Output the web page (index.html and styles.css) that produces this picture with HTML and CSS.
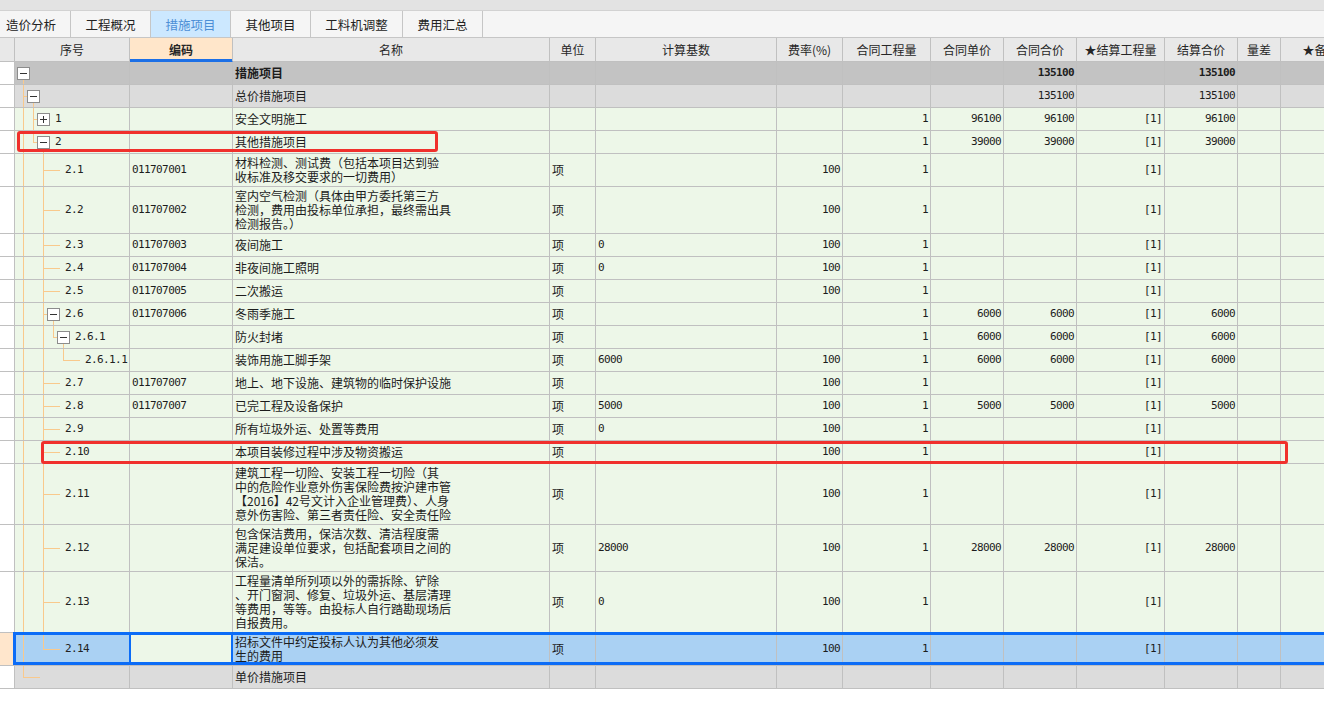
FILE: index.html
```html
<!DOCTYPE html>
<html lang="zh-CN">
<head>
<meta charset="utf-8">
<title>措施项目</title>
<link rel="stylesheet" href="styles.css">
</head>
<body>
<div class="topstrip"></div>
<div class="tabs">
  <div class="tab first">造价分析</div>
  <div class="tab">工程概况</div>
  <div class="tab active">措施项目</div>
  <div class="tab">其他项目</div>
  <div class="tab wide">工料机调整</div>
  <div class="tab">费用汇总</div>
</div>
<div class="grid">
  <div class="row head">
    <div class="c0"></div>
    <div><span>序号</span></div>
    <div class="hcode"><span>编码</span></div>
    <div><span>名称</span></div>
    <div><span>单位</span></div>
    <div><span>计算基数</span></div>
    <div><span>费率(%)</span></div>
    <div><span>合同工程量</span></div>
    <div><span>合同单价</span></div>
    <div><span>合同合价</span></div>
    <div><span>★结算工程量</span></div>
    <div><span>结算合价</span></div>
    <div><span>量差</span></div>
    <div><span>★备注</span></div>
  </div>

  <div class="row root">
    <div class="c0"></div>
    <div class="seq"><span class="bx ex"><span class="box"></span></span></div>
    <div></div>
    <div class="bold"><span>措施项目</span></div>
    <div></div><div></div><div></div><div></div><div></div>
    <div class="n bold"><span>135100</span></div>
    <div></div>
    <div class="n bold"><span>135100</span></div>
    <div></div><div></div>
  </div>

  <div class="row grp">
    <div class="c0"></div>
    <div class="seq"><span class="s t"></span><span class="bx ex"><span class="box"></span></span></div>
    <div></div>
    <div><span>总价措施项目</span></div>
    <div></div><div></div><div></div><div></div><div></div>
    <div class="n"><span>135100</span></div>
    <div></div>
    <div class="n"><span>135100</span></div>
    <div></div><div></div>
  </div>

  <div class="row">
    <div class="c0"></div>
    <div class="seq"><span class="s v"></span><span class="s t"></span><span class="bx"><span class="box plus"></span></span><span class="lb">1</span></div>
    <div></div>
    <div><span>安全文明施工</span></div>
    <div></div><div></div><div></div>
    <div class="n"><span>1</span></div>
    <div class="n"><span>96100</span></div>
    <div class="n"><span>96100</span></div>
    <div class="n"><span>[1]</span></div>
    <div class="n"><span>96100</span></div>
    <div></div><div></div>
  </div>

  <div class="row">
    <div class="c0"></div>
    <div class="seq"><span class="s v"></span><span class="s l"></span><span class="bx ex"><span class="box"></span></span><span class="lb">2</span></div>
    <div></div>
    <div><span>其他措施项目</span></div>
    <div></div><div></div><div></div>
    <div class="n"><span>1</span></div>
    <div class="n"><span>39000</span></div>
    <div class="n"><span>39000</span></div>
    <div class="n"><span>[1]</span></div>
    <div class="n"><span>39000</span></div>
    <div></div><div></div>
  </div>

  <div class="row">
    <div class="c0"></div>
    <div class="seq"><span class="s v"></span><span class="s"></span><span class="s t"></span><span class="lf"></span><span class="lb">2.1</span></div>
    <div class="m"><span>011707001</span></div>
    <div><span>材料检测、测试费（包括本项目达到验<br>收标准及移交要求的一切费用）</span></div>
    <div><span>项</span></div>
    <div></div>
    <div class="n"><span>100</span></div>
    <div class="n"><span>1</span></div>
    <div></div><div></div>
    <div class="n"><span>[1]</span></div>
    <div></div><div></div><div></div>
  </div>

  <div class="row">
    <div class="c0"></div>
    <div class="seq"><span class="s v"></span><span class="s"></span><span class="s t"></span><span class="lf"></span><span class="lb">2.2</span></div>
    <div class="m"><span>011707002</span></div>
    <div><span>室内空气检测（具体由甲方委托第三方<br>检测，费用由投标单位承担，最终需出具<br>检测报告。）</span></div>
    <div><span>项</span></div>
    <div></div>
    <div class="n"><span>100</span></div>
    <div class="n"><span>1</span></div>
    <div></div><div></div>
    <div class="n"><span>[1]</span></div>
    <div></div><div></div><div></div>
  </div>

  <div class="row">
    <div class="c0"></div>
    <div class="seq"><span class="s v"></span><span class="s"></span><span class="s t"></span><span class="lf"></span><span class="lb">2.3</span></div>
    <div class="m"><span>011707003</span></div>
    <div><span>夜间施工</span></div>
    <div><span>项</span></div>
    <div class="m"><span>0</span></div>
    <div class="n"><span>100</span></div>
    <div class="n"><span>1</span></div>
    <div></div><div></div>
    <div class="n"><span>[1]</span></div>
    <div></div><div></div><div></div>
  </div>

  <div class="row">
    <div class="c0"></div>
    <div class="seq"><span class="s v"></span><span class="s"></span><span class="s t"></span><span class="lf"></span><span class="lb">2.4</span></div>
    <div class="m"><span>011707004</span></div>
    <div><span>非夜间施工照明</span></div>
    <div><span>项</span></div>
    <div class="m"><span>0</span></div>
    <div class="n"><span>100</span></div>
    <div class="n"><span>1</span></div>
    <div></div><div></div>
    <div class="n"><span>[1]</span></div>
    <div></div><div></div><div></div>
  </div>

  <div class="row">
    <div class="c0"></div>
    <div class="seq"><span class="s v"></span><span class="s"></span><span class="s t"></span><span class="lf"></span><span class="lb">2.5</span></div>
    <div class="m"><span>011707005</span></div>
    <div><span>二次搬运</span></div>
    <div><span>项</span></div>
    <div></div>
    <div class="n"><span>100</span></div>
    <div class="n"><span>1</span></div>
    <div></div><div></div>
    <div class="n"><span>[1]</span></div>
    <div></div><div></div><div></div>
  </div>

  <div class="row">
    <div class="c0"></div>
    <div class="seq"><span class="s v"></span><span class="s"></span><span class="s t"></span><span class="bx ex"><span class="box"></span></span><span class="lb">2.6</span></div>
    <div class="m"><span>011707006</span></div>
    <div><span>冬雨季施工</span></div>
    <div><span>项</span></div>
    <div></div>
    <div></div>
    <div class="n"><span>1</span></div>
    <div class="n"><span>6000</span></div>
    <div class="n"><span>6000</span></div>
    <div class="n"><span>[1]</span></div>
    <div class="n"><span>6000</span></div>
    <div></div><div></div>
  </div>

  <div class="row">
    <div class="c0"></div>
    <div class="seq"><span class="s v"></span><span class="s"></span><span class="s v"></span><span class="s l"></span><span class="bx ex"><span class="box"></span></span><span class="lb">2.6.1</span></div>
    <div></div>
    <div><span>防火封堵</span></div>
    <div><span>项</span></div>
    <div></div>
    <div></div>
    <div class="n"><span>1</span></div>
    <div class="n"><span>6000</span></div>
    <div class="n"><span>6000</span></div>
    <div class="n"><span>[1]</span></div>
    <div class="n"><span>6000</span></div>
    <div></div><div></div>
  </div>

  <div class="row">
    <div class="c0"></div>
    <div class="seq"><span class="s v"></span><span class="s"></span><span class="s v"></span><span class="s"></span><span class="s l"></span><span class="lf"></span><span class="lb">2.6.1.1</span></div>
    <div></div>
    <div><span>装饰用施工脚手架</span></div>
    <div><span>项</span></div>
    <div class="m"><span>6000</span></div>
    <div class="n"><span>100</span></div>
    <div class="n"><span>1</span></div>
    <div class="n"><span>6000</span></div>
    <div class="n"><span>6000</span></div>
    <div class="n"><span>[1]</span></div>
    <div class="n"><span>6000</span></div>
    <div></div><div></div>
  </div>

  <div class="row">
    <div class="c0"></div>
    <div class="seq"><span class="s v"></span><span class="s"></span><span class="s t"></span><span class="lf"></span><span class="lb">2.7</span></div>
    <div class="m"><span>011707007</span></div>
    <div><span>地上、地下设施、建筑物的临时保护设施</span></div>
    <div><span>项</span></div>
    <div></div>
    <div class="n"><span>100</span></div>
    <div class="n"><span>1</span></div>
    <div></div><div></div>
    <div class="n"><span>[1]</span></div>
    <div></div><div></div><div></div>
  </div>

  <div class="row">
    <div class="c0"></div>
    <div class="seq"><span class="s v"></span><span class="s"></span><span class="s t"></span><span class="lf"></span><span class="lb">2.8</span></div>
    <div class="m"><span>011707007</span></div>
    <div><span>已完工程及设备保护</span></div>
    <div><span>项</span></div>
    <div class="m"><span>5000</span></div>
    <div class="n"><span>100</span></div>
    <div class="n"><span>1</span></div>
    <div class="n"><span>5000</span></div>
    <div class="n"><span>5000</span></div>
    <div class="n"><span>[1]</span></div>
    <div class="n"><span>5000</span></div>
    <div></div><div></div>
  </div>

  <div class="row">
    <div class="c0"></div>
    <div class="seq"><span class="s v"></span><span class="s"></span><span class="s t"></span><span class="lf"></span><span class="lb">2.9</span></div>
    <div></div>
    <div><span>所有垃圾外运、处置等费用</span></div>
    <div><span>项</span></div>
    <div class="m"><span>0</span></div>
    <div class="n"><span>100</span></div>
    <div class="n"><span>1</span></div>
    <div></div><div></div>
    <div class="n"><span>[1]</span></div>
    <div></div><div></div><div></div>
  </div>

  <div class="row">
    <div class="c0"></div>
    <div class="seq"><span class="s v"></span><span class="s"></span><span class="s t"></span><span class="lf"></span><span class="lb">2.10</span></div>
    <div></div>
    <div><span>本项目装修过程中涉及物资搬运</span></div>
    <div><span>项</span></div>
    <div></div>
    <div class="n"><span>100</span></div>
    <div class="n"><span>1</span></div>
    <div></div><div></div>
    <div class="n"><span>[1]</span></div>
    <div></div><div></div><div></div>
  </div>

  <div class="row">
    <div class="c0"></div>
    <div class="seq"><span class="s v"></span><span class="s"></span><span class="s t"></span><span class="lf"></span><span class="lb">2.11</span></div>
    <div></div>
    <div><span>建筑工程一切险、安装工程一切险（其<br>中的危险作业意外伤害保险费按沪建市管<br>【2016】42号文计入企业管理费）、人身<br>意外伤害险、第三者责任险、安全责任险</span></div>
    <div><span>项</span></div>
    <div></div>
    <div class="n"><span>100</span></div>
    <div class="n"><span>1</span></div>
    <div></div><div></div>
    <div class="n"><span>[1]</span></div>
    <div></div><div></div><div></div>
  </div>

  <div class="row">
    <div class="c0"></div>
    <div class="seq"><span class="s v"></span><span class="s"></span><span class="s t"></span><span class="lf"></span><span class="lb">2.12</span></div>
    <div></div>
    <div><span>包含保洁费用，保洁次数、清洁程度需<br>满足建设单位要求，包括配套项目之间的<br>保洁。</span></div>
    <div><span>项</span></div>
    <div class="m"><span>28000</span></div>
    <div class="n"><span>100</span></div>
    <div class="n"><span>1</span></div>
    <div class="n"><span>28000</span></div>
    <div class="n"><span>28000</span></div>
    <div class="n"><span>[1]</span></div>
    <div class="n"><span>28000</span></div>
    <div></div><div></div>
  </div>

  <div class="row">
    <div class="c0"></div>
    <div class="seq"><span class="s v"></span><span class="s"></span><span class="s t"></span><span class="lf"></span><span class="lb">2.13</span></div>
    <div></div>
    <div><span>工程量清单所列项以外的需拆除、铲除<br>、开门窗洞、修复、垃圾外运、基层清理<br>等费用，等等。由投标人自行踏勘现场后<br>自报费用。</span></div>
    <div><span>项</span></div>
    <div class="m"><span>0</span></div>
    <div class="n"><span>100</span></div>
    <div class="n"><span>1</span></div>
    <div></div><div></div>
    <div class="n"><span>[1]</span></div>
    <div></div><div></div><div></div>
  </div>

  <div class="row sel">
    <div class="c0"></div>
    <div class="seq"><span class="s v"></span><span class="s"></span><span class="s l"></span><span class="lf"></span><span class="lb">2.14</span></div>
    <div class="cur"></div>
    <div><span>招标文件中约定投标人认为其他必须发<br>生的费用</span></div>
    <div><span>项</span></div>
    <div></div>
    <div class="n"><span>100</span></div>
    <div class="n"><span>1</span></div>
    <div></div><div></div>
    <div class="n"><span>[1]</span></div>
    <div></div><div></div><div></div>
  </div>

  <div class="row grp">
    <div class="c0"></div>
    <div class="seq"><span class="s l"></span><span class="lf"></span></div>
    <div></div>
    <div><span>单价措施项目</span></div>
    <div></div><div></div><div></div><div></div><div></div><div></div><div></div><div></div><div></div><div></div>
  </div>
</div>

<div class="mark mark1"></div>
<div class="mark mark2"></div>
</body>
</html>
```

FILE: styles.css
```css
* { box-sizing: border-box; }
html, body { margin: 0; padding: 0; }
body {
  width: 1324px;
  height: 701px;
  overflow: hidden;
  position: relative;
  background: #ffffff;
  font-family: "Noto Sans CJK SC", "Noto Sans", sans-serif;
  font-size: 12px;
  color: #1c1c1c;
}

.topstrip {
  height: 11px;
  background: #e3e3e3;
  border-bottom: 1px solid #d2d2d2;
}

.tabs {
  display: flex;
  height: 27px;
  background: #f5f5f5;
  border-bottom: 1px solid #c6c6c6;
}
.tab {
  width: 80px;
  display: flex;
  align-items: center;
  justify-content: center;
  border-right: 1px solid #c6c6c6;
  color: #222;
  font-size: 12.5px;
}
.tab.first { width: 71px; justify-content: flex-start; padding-left: 6px; }
.tab.wide { width: 92px; }
.tab.active { background: #cce8ff; color: #4c8fd6; }

.grid { width: 1361px; }

.row {
  display: grid;
  grid-template-columns: 15px 115px 103px 317px 46px 181px 66px 88px 73px 73px 88px 73px 43px 80px;
  position: relative;
}
.row > div {
  min-height: 23px;
  padding: 2px 2px;
  line-height: 14px;
  display: flex;
  align-items: center;
  white-space: nowrap;
  overflow: hidden;
  border-right: 1px solid #c0c0c0;
  border-bottom: 1px solid #c0c0c0;
  background: #edf7e8;
}
.row > div.c0 { background: #ffffff; padding: 0; }

.row.head > div {
  min-height: 24px;
  justify-content: center;
  background: #e8e8e8;
  color: #262626;
}
.row.head > div.c0 { background: #e8e8e8; }
.row.head > div.hcode {
  background: #ffe6ca;
  font-weight: bold;
  border-bottom-color: #1b6fe6;
  box-shadow: inset 0 -2px 0 #1b6fe6;
}

.row.root > div:not(.c0) { background: #c3c3c3; }
.row.grp > div:not(.c0) { background: #dcdcdc; }

.bold { font-weight: bold; }

.m, .n, .lb {
  font-family: "DejaVu Sans Mono", "Liberation Mono", monospace;
  font-size: 11px;
  letter-spacing: -0.6px;
}
.n { justify-content: flex-end; padding-right: 3px; }

/* tree column */
.row > div.seq {
  padding: 0 0 0 3px;
  align-items: stretch;
}
.s { flex: none; width: 10px; }
.s.v {
  background: linear-gradient(#f9c98c, #f9c98c) no-repeat 5px 0 / 1px 100%;
}
.s.t {
  background:
    linear-gradient(#f9c98c, #f9c98c) no-repeat 5px 0 / 1px 100%,
    linear-gradient(#f9c98c, #f9c98c) no-repeat 5px 50% / 5px 1px;
}
.s.l {
  background:
    linear-gradient(#f9c98c, #f9c98c) no-repeat 5px 0 / 1px 50%,
    linear-gradient(#f9c98c, #f9c98c) no-repeat 5px 50% / 5px 1px;
}
.bx {
  flex: none;
  width: 13px;
  margin-left: -1px;
  display: flex;
  align-items: center;
}
.bx.ex {
  background: linear-gradient(#f9c98c, #f9c98c) no-repeat 6px 100% / 1px 50%;
}
.box {
  width: 13px;
  height: 13px;
  border: 1px solid #8c8c8c;
  background:
    linear-gradient(#333, #333) no-repeat center / 7px 1px,
    #ffffff;
}
.box.plus {
  background:
    linear-gradient(#333, #333) no-repeat center / 7px 1px,
    linear-gradient(#333, #333) no-repeat center / 1px 7px,
    #ffffff;
}
.lf {
  flex: none;
  width: 13px;
  margin-left: -1px;
  background: linear-gradient(#f9c98c, #f9c98c) no-repeat 0 50% / 100% 1px;
}
.lb {
  align-self: center;
  margin-left: 5px;
  color: #222;
}

/* selected row */
.row.sel > div { background: #aad1f3; }
.row.sel > div.c0 { background: #ffe6cc; }
.row.sel > div.cur {
  background: #edf7e8;
  position: relative;
  overflow: visible;
}
.row.sel > div.cur::after {
  content: "";
  position: absolute;
  left: -1px;
  right: -1px;
  top: 0;
  bottom: 0;
  border-left: 2px solid #0b6cf7;
  border-right: 2px solid #0b6cf7;
  pointer-events: none;
}
.row.sel::after {
  content: "";
  position: absolute;
  left: 13px;
  right: 0;
  top: -1px;
  bottom: 1px;
  border: 3px solid #0b6cf7;
  border-right: none;
  pointer-events: none;
}

/* red annotation marks */
.mark {
  position: absolute;
  border: 3px solid #f0302c;
  border-radius: 3px;
  pointer-events: none;
}
.mark1 { left: 17px; top: 131px; width: 421px; height: 21px; }
.mark2 { left: 41px; top: 441px; width: 1247px; height: 23px; }
```
